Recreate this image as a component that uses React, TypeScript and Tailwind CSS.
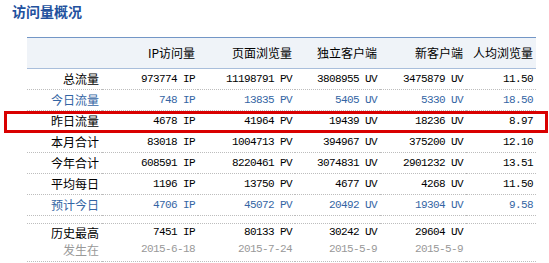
import React from "react";

type Row = {
  label: string;
  ip: string;
  pv: string;
  uv: string;
  nuv: string;
  avg: string;
  blue?: boolean;
};

const rows: Row[] = [
  { label: "总流量", ip: "973774", pv: "11198791", uv: "3808955", nuv: "3475879", avg: "11.50" },
  { label: "今日流量", ip: "748", pv: "13835", uv: "5405", nuv: "5330", avg: "18.50", blue: true },
  { label: "昨日流量", ip: "4678", pv: "41964", uv: "19439", nuv: "18236", avg: "8.97" },
  { label: "本月合计", ip: "83018", pv: "1004713", uv: "394967", nuv: "375200", avg: "12.10" },
  { label: "今年合计", ip: "608591", pv: "8220461", uv: "3074831", nuv: "2901232", avg: "13.51" },
  { label: "平均每日", ip: "1196", pv: "13750", uv: "4677", nuv: "4268", avg: "11.50" },
  { label: "预计今日", ip: "4706", pv: "45072", uv: "20492", nuv: "19304", avg: "9.58", blue: true },
];

// 历史最高 row: value on top, date underneath
const best = [
  { v: "7451 IP", d: "2015-6-18" },
  { v: "80133 PV", d: "2015-7-24" },
  { v: "30242 UV", d: "2015-5-9" },
  { v: "29604 UV", d: "2015-5-9" },
];

const cjk = "font-['Noto_Sans_CJK_SC',sans-serif]";
const mono = "font-['Liberation_Mono','Noto_Sans_CJK_SC',monospace] text-[11px] tracking-[-0.6px]";
const cell = "pr-[3px] text-right";

export default function App() {
  return (
    <div className="relative w-[549px] h-[263px] bg-white overflow-hidden">
      <div className={`${cjk} h-[37px] pl-[12px] pt-[3px] text-[14px] leading-[16px] font-bold text-[#22519e]`}>
        访问量概况
      </div>

      <table className="ml-[27px] w-[509px] table-fixed border-collapse text-black">
        <colgroup>
          <col className="w-[75px]" />
          <col className="w-[96px]" />
          <col className="w-[97px]" />
          <col className="w-[85px]" />
          <col className="w-[86px]" />
          <col className="w-[70px]" />
        </colgroup>
        <thead>
          <tr className={`${cjk} h-[31px] text-[12px] bg-[#eff3f8] border-t border-t-[#7396c6] border-b border-b-[#a9bedb]`}>
            <th className={`${cell} font-normal`}></th>
            <th className={`${cell} font-normal`}>IP访问量</th>
            <th className={`${cell} font-normal`}>页面浏览量</th>
            <th className={`${cell} font-normal`}>独立客户端</th>
            <th className={`${cell} font-normal`}>新客户端</th>
            <th className={`${cell} font-normal`}>人均浏览量</th>
          </tr>
        </thead>
        <tbody>
          {rows.map((r) => (
            <tr
              key={r.label}
              className={`h-[21px] border-b border-dotted border-[#bdbdbd] ${r.blue ? "text-[#3465a4]" : "text-black"}`}
            >
              <td className={`${cell} ${cjk} text-[12px]`}>{r.label}</td>
              <td className={`${cell} ${mono}`}>{r.ip} IP</td>
              <td className={`${cell} ${mono}`}>{r.pv} PV</td>
              <td className={`${cell} ${mono}`}>{r.uv} UV</td>
              <td className={`${cell} ${mono}`}>{r.nuv} UV</td>
              <td className={`${cell} ${mono}`}>{r.avg}</td>
            </tr>
          ))}
          <tr className="h-[8px] border-b border-dotted border-[#bdbdbd]">
            <td colSpan={6}></td>
          </tr>
          <tr className="h-[38px] border-b border-dotted border-[#bdbdbd] align-top">
            <td className={`${cell} ${cjk} text-[12px] leading-[17px]`}>
              <div>历史最高</div>
              <div className="text-[#999]">发生在</div>
            </td>
            {best.map((b, i) => (
              <td key={i} className={`${cell} ${mono} leading-[17px]`}>
                <div>{b.v}</div>
                <div className="text-[#999]">{b.d}</div>
              </td>
            ))}
            <td className={cell}></td>
          </tr>
        </tbody>
      </table>

      {/* red highlight box around yesterday's row */}
      <div className="absolute left-[4px] top-[111px] w-[544px] h-[22px] border-[3px] border-[#d90000]" />
    </div>
  );
}
